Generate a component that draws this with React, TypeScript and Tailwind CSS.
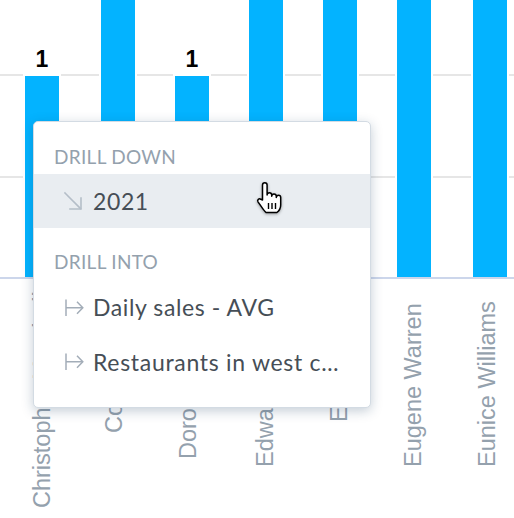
import React from "react";

const bars = [
  { x: 25, top: 76, label: true },
  { x: 101, top: -10, label: false },
  { x: 175, top: 76, label: true },
  { x: 249, top: -10, label: false },
  { x: 323, top: -10, label: false },
  { x: 397, top: -10, label: false },
  { x: 473, top: -10, label: false },
];

const axisLabels = [
  { name: "Christopher Marshall", x: 50, y: 508 },
  { name: "Cory Owens Smith", x: 122, y: 433 },
  { name: "Dorothy Ross Lee", x: 196, y: 459 },
  { name: "Edward Gray Bell", x: 273, y: 467 },
  { name: "Elizabeth Kent", x: 347, y: 422 },
  { name: "Eugene Warren", x: 421, y: 467 },
  { name: "Eunice Williams", x: 495, y: 467 },
];

function Chart() {
  const base = 277;
  return (
    <svg width={514} height={518} className="block">
      <rect x={0} y={74} width={514} height={2} fill="#e6e6e6" />
      <rect x={0} y={176} width={514} height={2} fill="#e6e6e6" />
      {bars.map((b, i) => (
        <g key={i}>
          <rect x={b.x - 2} y={b.top - 2} width={38} height={base - b.top + 2} fill="#ffffff" />
          <rect x={b.x} y={b.top} width={34} height={base - b.top} fill="#03b3ff" />
          {b.label && (
            <text
              x={b.x + 17}
              y={66.5}
              textAnchor="middle"
              fontFamily="'Liberation Sans', Arial, sans-serif"
              fontWeight={700}
              fontSize={23}
              fill="#000000"
            >
              1
            </text>
          )}
        </g>
      ))}
      <rect x={0} y={277} width={514} height={2} fill="#ccd6eb" />
      {axisLabels.map((l, i) => (
        <text
          key={i}
          transform={`translate(${l.x} ${l.y}) rotate(-90)`}
          fontFamily="'Liberation Sans', Arial, sans-serif"
          fontSize={23.5}
          fill="#94a1ad"
        >
          {l.name}
        </text>
      ))}
    </svg>
  );
}

function DrillDownIcon() {
  return (
    <svg width={20} height={20} viewBox="0 0 20 20" className="block">
      <g stroke="#b4bec8" strokeWidth={1.6} fill="none" strokeLinecap="square">
        <path d="M2 2 L17.5 17.5" />
        <path d="M7 18 H18 V7" />
      </g>
    </svg>
  );
}

function DrillIntoIcon() {
  return (
    <svg width={20} height={20} viewBox="0 0 20 20" className="block">
      <g stroke="#a3adb8" strokeWidth={1.5} fill="none">
        <path d="M2 1.5 V18" />
        <path d="M2 9.75 H18.5" />
        <path d="M13 3.8 L18.8 9.75 L13 15.7" />
      </g>
    </svg>
  );
}

function HandCursor() {
  return (
    <svg width={30} height={36} viewBox="0 0 30 36" className="block" style={{ filter: "drop-shadow(0 1px 1.5px rgba(0,0,0,0.35))" }}>
      <path
        d="M7.5 19 V4 a2.3 2.3 0 0 1 4.6 0 V14 a2.3 2.3 0 0 1 4.6 0 v1.2 a2.3 2.3 0 0 1 4.6 0 v1.3 a2.2 2.2 0 0 1 4.4 0 V24 c0 3.5 -1.8 6 -3.8 7.5 H11 c-1.6 -1.3 -3.2 -3.6 -5 -6.3 L3 20.8 a1.9 1.9 0 0 1 2.8 -2.5 Z"
        fill="#ffffff"
        stroke="#000000"
        strokeWidth={1.5}
        strokeLinejoin="round"
      />
      <g stroke="#000000" strokeWidth={1.4}>
        <path d="M13.5 22 V28" />
        <path d="M17 22 V28" />
        <path d="M20.5 22 V28" />
      </g>
    </svg>
  );
}

export default function App() {
  return (
    <div className="relative w-[514px] h-[518px] overflow-hidden bg-white">
      <Chart />
      <div
        className="absolute left-[33px] top-[121px] w-[338px] rounded-[5px] border border-[#d3dbe3] bg-white shadow-[0_3px_12px_rgba(20,56,93,0.25)]"
        style={{ fontFamily: "Lato, 'Open Sans', sans-serif" }}
      >
        <div className="h-[52px] pt-[23px] pl-[20px] text-[19px] leading-[24px] text-[#94a1ad] tracking-[0.3px]">
          DRILL DOWN
        </div>
        <div className="h-[54px] flex items-center bg-[#e9edf1] pl-[29px] gap-[10px]">
          <DrillDownIcon />
          <span className="text-[23px] tracking-[0.6px] text-[#464e56]">2021</span>
        </div>
        <div className="h-[52px] pt-[22px] pl-[20px] text-[19px] leading-[24px] text-[#94a1ad] tracking-[0.3px]">
          DRILL INTO
        </div>
        <div className="h-[55px] flex items-center pl-[30px] gap-[9px]">
          <DrillIntoIcon />
          <span className="text-[23px] tracking-[0.6px] text-[#464e56]">Daily sales - AVG</span>
        </div>
        <div className="h-[54px] flex items-center pl-[30px] gap-[9px]">
          <DrillIntoIcon />
          <span className="text-[23px] tracking-[0.7px] text-[#464e56] whitespace-nowrap">Restaurants in west c…</span>
        </div>
        <div className="h-[18px]" />
      </div>
      <div className="absolute left-[255px] top-[181px]">
        <HandCursor />
      </div>
    </div>
  );
}
